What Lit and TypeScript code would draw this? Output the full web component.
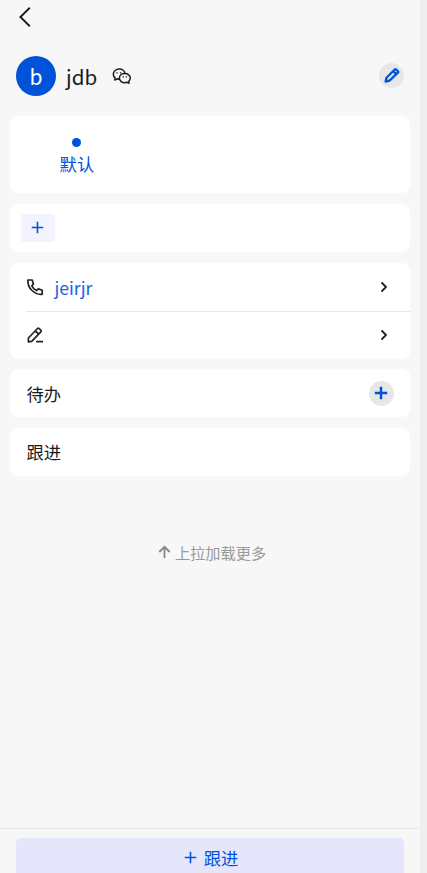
import { LitElement, html, css, svg } from "lit";
import { customElement } from "lit/decorators.js";

const plus = (size: number, w: number) => html`<svg class="ic" width=${size} height=${size} viewBox="0 0 14 14">
  <path d="M7 .8v12.4M.8 7h12.4" fill="none" stroke="currentColor" stroke-width=${w} /></svg>`;

const chevron = html`<svg class="ic" width="8" height="12" viewBox="0 0 8 12">
  <path d="M1.5 1.3 6 6 1.5 10.7" fill="none" stroke="#222" stroke-width="1.9" /></svg>`;

const phone = html`<svg class="ic" width="18" height="18" viewBox="0 0 18 18">
  <path d="M1.9 2H6.2L7.4 6.2 5.8 7.9Q7.4 11.1 10.5 12.6L12.2 10.9 16.2 12.2V16.3Q10.6 16.9 6 12.5T1.9 2Z"
    fill="none" stroke="#222" stroke-width="1.7" stroke-linejoin="round" /></svg>`;

const edit = html`<svg class="ic" width="18" height="18" viewBox="0 0 18 18">
  <path d="M2.4 15.8V12L11.5 2.5Q12.3 1.7 13.1 2.5L14.8 4.2Q15.6 5 14.8 5.8L5.7 15.4ZM9.3 4.8 12.7 8.2M10.1 15.6H17"
    fill="none" stroke="#222" stroke-width="1.7" stroke-linejoin="round" /></svg>`;

const eyes = svg`<path d="M5 5.2v1.3M8.6 5.2v1.3M11.2 9.3v1.2M14.4 9.3v1.2" stroke-width="1.3" />`;

@customElement("app-root")
export class AppRoot extends LitElement {
  static styles = css`
    :host {
      display: block;
      height: 873px;
      overflow: hidden;
      background: #efefef;
      font-family: "Noto Sans CJK SC", "Noto Sans", sans-serif;
      color: #1a1a1a;
    }
    .page {
      box-sizing: border-box;
      width: 420px;
      height: 873px;
      background: #f7f7f7;
      display: flex;
      flex-direction: column;
      overflow: hidden;
    }
    .ic { display: block; flex: none; }
    .nav { height: 35px; padding: 6px 0 0 18px; box-sizing: border-box; }
    .head {
      height: 81px;
      padding: 0 16px;
      box-sizing: border-box;
      display: flex;
      align-items: center;
      flex: none;
    }
    .avatar {
      width: 40px; height: 40px;
      border-radius: 50%;
      background: #0052d9;
      color: #fff;
      font-size: 21px;
      line-height: 40px;
      text-align: center;
    }
    .name { width: 32px; font-size: 20.6px; margin: 0 14px 0 10px; line-height: 28px; }
    .round {
      width: 25px; height: 25px;
      border-radius: 50%;
      background: #e7e7e7;
      color: #0052d9;
      display: flex;
      align-items: center;
      justify-content: center;
      margin-left: auto;
    }
    .cards { display: flex; flex-direction: column; gap: 10.5px; padding: 0.4px 10.3px 0 10.4px; }
    .card { background: #fff; border-radius: 8px; box-sizing: border-box; font-size: 17.3px; }
    .tabs { height: 77px; display: flex; padding-left: 16px; }
    .tab {
      width: 101px;
      display: flex;
      flex-direction: column;
      align-items: center;
      color: #0052d9;
      line-height: 24px;
      padding-top: 22px;
      box-sizing: border-box;
    }
    .dot { width: 9px; height: 9px; border-radius: 50%; background: #0052d9; margin-bottom: 5px; }
    .tags { height: 48.5px; padding: 10.4px; }
    .tag {
      width: 34px; height: 27.5px;
      border-radius: 3px;
      background: #f2f3ff;
      color: #0052d9;
      display: flex;
      justify-content: center;
      padding-top: 6.5px;
      box-sizing: border-box;
    }
    .row { height: 48px; display: flex; align-items: center; padding: 0 21.5px 0 16px; box-sizing: border-box; }
    .row + .row { margin-left: 16px; padding: 0 21.5px 1px 0; border-top: 1px solid #e7e7e7; }
    .link { color: #1764e8; font-size: 17.6px; margin-left: 10px; line-height: 24px; padding-top: 2px; }
    .push { margin-left: auto; }
    .single { height: 48px; padding: 0 16px; display: flex; align-items: center; }
    .more {
      margin-top: 65.4px;
      display: flex;
      align-items: center;
      justify-content: center;
      gap: 4px;
      padding-left: 4px;
      color: #999;
      font-size: 15.2px;
      line-height: 22px;
    }
    .foot {
      margin-top: auto;
      height: 45px;
      flex: none;
      box-sizing: border-box;
      border-top: 1px solid #e7e7e7;
      padding: 8.6px 16px 0;
    }
    .btn {
      height: 44px;
      border-radius: 5px;
      background: #e5e6fb;
      color: #0052d9;
      display: flex;
      align-items: center;
      justify-content: center;
      gap: 7px;
      font-size: 17.3px;
      box-sizing: border-box;
      padding: 0 0 4.5px 2px;
    }
  `;

  render() {
    return html`
      <div class="page">
        <div class="nav">
          <svg class="ic" width="14" height="22" viewBox="0 0 14 22">
            <path d="M11.8 1.8 2.4 11l9.4 9.2" fill="none" stroke="#1a1a1a" stroke-width="1.9" />
          </svg>
        </div>
        <div class="head">
          <div class="avatar">b</div>
          <div class="name">jdb</div>
          <svg class="ic" width="20" height="18" viewBox="0 0 20 18" fill="none" stroke="#1a1a1a" stroke-width="1.5" stroke-linejoin="round">
            <path d="M8 12.3Q6.3 12.4 5 11.8L2.8 13 3 10.7Q1.3 9.4 1.3 7.2C1.3 4.2 4 2 7.2 2S12.8 4 13 6.5" />
            <path d="M12.8 6.5c3 0 5.5 2 5.5 4.5q0 2-1.5 3.3l.2 1.9-2-.9q-1 .4-2.2.4c-3 0-5.4-2.1-5.4-4.7s2.4-4.5 5.4-4.5Z" />
            ${eyes}
          </svg>
          <div class="round">
            <svg class="ic" width="17" height="17" viewBox="0 0 17 17">
              <path d="M2.6 14.5 3.5 10.8 11.7 2.5Q12.4 1.8 13.2 2.5L14.9 4.2Q15.6 5 14.9 5.7L6.5 13.7ZM10.4 4.2 13.1 6.9"
                fill="none" stroke="currentColor" stroke-width="2.3" stroke-linejoin="round" />
              <path d="M2.1 15 2.8 11.3 5.8 14.3Z" fill="currentColor" />
            </svg>
          </div>
        </div>
        <div class="cards">
          <div class="card tabs"><div class="tab"><i class="dot"></i>默认</div></div>
          <div class="card tags"><div class="tag">${plus(13, 1.7)}</div></div>
          <div class="card">
            <div class="row">${phone}<span class="link">jeirjr</span><span class="push">${chevron}</span></div>
            <div class="row">${edit}<span class="push">${chevron}</span></div>
          </div>
          <div class="card single">待办<span class="round">${plus(14, 2.4)}</span></div>
          <div class="card single">跟进</div>
        </div>
        <div class="more">
          <svg class="ic" width="13" height="14" viewBox="0 0 13 14">
            <path d="M6.5 13V2M1.3 7 6.5 1.8 11.7 7" fill="none" stroke="#888" stroke-width="1.8" />
          </svg>
          <span>上拉加载更多</span>
        </div>
        <div class="foot"><div class="btn">${plus(13, 1.7)}<span>跟进</span></div></div>
      </div>
    `;
  }
}
